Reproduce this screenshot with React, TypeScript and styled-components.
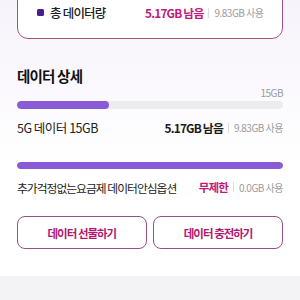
import React from 'react'
import styled, { createGlobalStyle } from 'styled-components'

const GlobalStyle = createGlobalStyle`
  html, body {
    margin: 0;
    padding: 0;
    background: #fff;
  }
  body {
    font-family: "Noto Sans CJK KR", "Noto Sans", sans-serif;
    color: #222;
    -webkit-font-smoothing: antialiased;
  }
`

type UsageProps = {
  remain: string
  used: string
  accent?: boolean
  small?: boolean
}

const Usage = ({ remain, used, accent, small }: UsageProps) => (
  <S.Usage>
    <S.Remain accent={accent} small={small}>{remain}</S.Remain>
    <S.Divider />
    <S.Used>{used}</S.Used>
  </S.Usage>
)

const App = () => {
  const total = 15
  const left = 5.17

  return (
    <>
      <GlobalStyle />
      <S.Page>
        <S.Card>
          <S.CardRow>
            <S.Legend>
              <S.Dot />
              <S.LegendText>총 데이터량</S.LegendText>
            </S.Legend>
            <Usage remain="5.17GB 남음" used="9.83GB 사용" accent />
          </S.CardRow>
        </S.Card>

        <S.Section>
          <S.Title>데이터 상세</S.Title>
          <S.BarLabel>15GB</S.BarLabel>
          <S.Track>
            <S.Fill style={{ width: `${(left / total) * 100}%` }} />
          </S.Track>
          <S.Row>
            <S.Name latin>5G 데이터 15GB</S.Name>
            <Usage remain="5.17GB 남음" used="9.83GB 사용" />
          </S.Row>

          <S.Track thin>
            <S.Fill style={{ width: '100%' }} />
          </S.Track>
          <S.Row>
            <S.Name>추가걱정없는요금제 데이터안심옵션</S.Name>
            <Usage remain="무제한" used="0.0GB 사용" accent small />
          </S.Row>

          <S.Buttons>
            <S.Button>데이터 선물하기</S.Button>
            <S.Button>데이터 충전하기</S.Button>
          </S.Buttons>
        </S.Section>

        <S.Band />
      </S.Page>
    </>
  )
}

const S = {
  Page: styled.div`
    width: 300px;
    height: 300px;
    overflow: hidden;
    background: linear-gradient(180deg, #f7f3fb 0%, #fbf9fd 90px, #ffffff 170px);
  `,
  Card: styled.div`
    margin: -20px 17px 0;
    padding: 23.5px 18.5px 17.5px;
    border: 1.5px solid #a8508c;
    border-radius: 11px;
    background: #fff;
  `,
  CardRow: styled.div`
    display: flex;
    align-items: center;
    justify-content: space-between;
    height: 16px;
  `,
  Legend: styled.div`
    display: flex;
    align-items: center;
    gap: 6px;
  `,
  Dot: styled.span`
    width: 7.5px;
    height: 7.5px;
    border-radius: 1.5px;
    background: #4a1c8c;
  `,
  LegendText: styled.span`
    font-size: 12.5px;
    font-weight: 500;
    letter-spacing: -0.8px;
    color: #222;
  `,
  Usage: styled.div`
    display: flex;
    align-items: center;
  `,
  Remain: styled.span<{ accent?: boolean; small?: boolean }>`
    font-size: ${({ small }) => (small ? '11.5px' : '11.8px')};
    font-weight: 700;
    letter-spacing: -0.8px;
    color: ${({ accent }) => (accent ? '#c3187b' : '#1a1a1a')};
  `,
  Divider: styled.span`
    width: 1px;
    height: 10px;
    margin: 0 5px;
    background: #dcdcdf;
  `,
  Used: styled.span`
    font-size: 10px;
    letter-spacing: -0.5px;
    color: #9a9a9f;
  `,
  Section: styled.div`
    padding: 0 17px;
  `,
  Title: styled.div`
    margin-top: 27.5px;
    height: 18px;
    line-height: 18px;
    font-size: 14.5px;
    font-weight: 700;
    letter-spacing: -0.8px;
    color: #111;
  `,
  BarLabel: styled.div`
    margin-top: 2.5px;
    height: 12px;
    line-height: 12px;
    text-align: right;
    font-size: 10px;
    letter-spacing: -0.5px;
    color: #9a9a9f;
  `,
  Track: styled.div<{ thin?: boolean }>`
    margin-top: ${({ thin }) => (thin ? '26px' : '2px')};
    height: ${({ thin }) => (thin ? '7px' : '8px')};
    border-radius: 4px;
    background: #ececef;
    overflow: hidden;
  `,
  Fill: styled.div`
    height: 100%;
    border-radius: 4px;
    background: #8a5bd6;
  `,
  Row: styled.div`
    margin-top: 10.5px;
    height: 16px;
    display: flex;
    align-items: center;
    justify-content: space-between;
  `,
  Name: styled.span<{ latin?: boolean }>`
    font-size: ${({ latin }) => (latin ? '12.5px' : '11.8px')};
    letter-spacing: ${({ latin }) => (latin ? '-0.5px' : '-1px')};
    color: #222;
  `,
  Buttons: styled.div`
    margin-top: 21px;
    display: grid;
    grid-template-columns: 1fr 1fr;
    gap: 6.5px;
  `,
  Button: styled.button`
    height: 33px;
    padding: 0;
    border: 1.2px solid #9c4d86;
    border-radius: 8px;
    background: #fff;
    font-family: "Noto Sans CJK KR", "Noto Sans", sans-serif;
    font-size: 11.5px;
    font-weight: 700;
    letter-spacing: -1px;
    color: #b1186f;
  `,
  Band: styled.div`
    margin-top: 27px;
    height: 30px;
    background: #f3f3f6;
  `,
}

export default App
